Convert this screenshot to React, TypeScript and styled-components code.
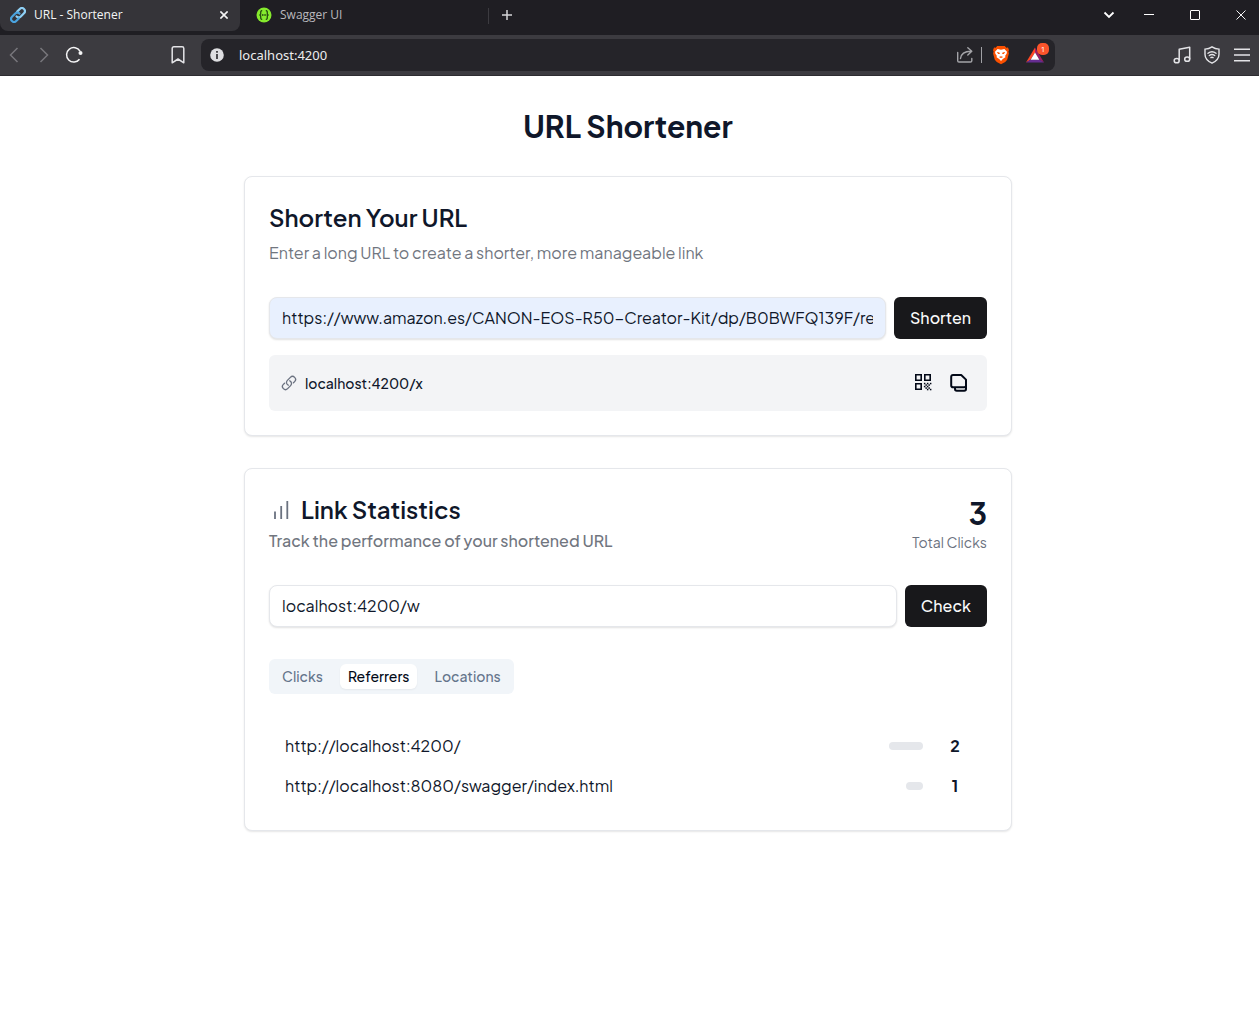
import React, { useState } from "react";
import styled, { createGlobalStyle } from "styled-components";
import { HiOutlineLink } from "react-icons/hi2";

const GlobalStyle = createGlobalStyle`
  *, *::before, *::after { box-sizing: border-box; }
  body {
    margin: 0;
    background: #fff;
    color: #0f172a;
    font-family: "Plus Jakarta Sans", Inter, "Liberation Sans", sans-serif;
    font-size: 16px;
    line-height: 24px;
  }
  button, input { font: inherit; color: inherit; }
  button { border: 0; padding: 0; background: none; cursor: pointer; }
  h1, h2, p { margin: 0; }
  svg { display: block; flex: none; }
`;

/* ---------- Browser chrome ---------- */

const Chrome = styled.header`
  font-family: "Segoe UI", "Open Sans", "Noto Sans", sans-serif;
  font-size: 12px;
  line-height: 16px;
  color: #f4f4f5;
`;

const TabStrip = styled.div`
  display: flex;
  align-items: flex-start;
  height: 35px;
  background: #1f1e23;
`;

const BrowserTab = styled.div<{ $active?: boolean }>`
  display: flex;
  align-items: center;
  gap: 8px;
  flex: 0 1 ${(p) => (p.$active ? 240 : 248)}px;
  height: 31px;
  padding: 0 8px 1px ${(p) => (p.$active ? 10 : 16)}px;
  border-radius: 0 0 8px 8px;
  background: ${(p) => (p.$active ? "#353439" : "transparent")};
  color: ${(p) => (p.$active ? "#f4f4f5" : "#b9b8bd")};
`;

const TabTitle = styled.span`
  flex: 1;
  white-space: nowrap;
`;

const IconButton = styled.button<{ $width: number }>`
  display: flex;
  align-items: center;
  justify-content: center;
  width: ${(p) => p.$width}px;
  height: 30px;
`;

const StripDivider = styled.span`
  width: 1px;
  height: 16px;
  margin-top: 8px;
  background: #3c3b40;
`;

const WindowControls = styled.div`
  display: flex;
  gap: 10px;
  margin-left: 4px;
`;

const Spacer = styled.div`
  flex: 1;
`;

const Toolbar = styled.div`
  display: grid;
  grid-template-columns: 201px 1fr 204px;
  align-items: center;
  height: 41px;
  background: #3c3b40;
  border-bottom: 1px solid #2d2c31;
`;

const NavButtons = styled.div`
  display: flex;
  gap: 2px;
  padding-right: 9px;
`;

const ToolButtons = styled.div`
  display: flex;
  justify-content: flex-end;
  gap: 2px;
  padding-right: 3px;
`;

const AddressBar = styled.div`
  display: flex;
  align-items: center;
  height: 32px;
  padding: 0 11px 0 9px;
  border-radius: 8px;
  background: #252429;
`;

const AddressInput = styled.input`
  flex: 1;
  min-width: 0;
  margin-left: 15px;
  padding: 0;
  border: 0;
  outline: 0;
  background: none;
  font-family: "Segoe UI", "Noto Sans", sans-serif;
  font-size: 13px;
  color: #ececee;
`;

const AddressActions = styled.div`
  display: flex;
  align-items: center;
`;

const ActionDivider = styled.span`
  width: 1px;
  height: 16px;
  margin: 0 10px 0 7px;
  background: #a0a0a4;
`;

const Rewards = styled.button`
  position: relative;
  margin-left: 16px;
`;

const Badge = styled.span`
  position: absolute;
  top: -4px;
  right: -5px;
  width: 12px;
  height: 12px;
  border-radius: 5px;
  background: #fb542b;
  color: #fff;
  font-size: 8px;
  line-height: 12px;
  text-align: center;
`;

/* ---------- Page ---------- */

const Main = styled.main`
  padding: 32px 19px 32px 16px;
`;

const Container = styled.div`
  display: flex;
  flex-direction: column;
  gap: 32px;
  max-width: 768px;
  margin: 0 auto;
`;

const PageTitle = styled.h1`
  font-size: 30px;
  line-height: 36px;
  font-weight: 700;
  text-align: center;
`;

const Card = styled.section`
  padding: 24px;
  border: 1px solid #e5e7eb;
  border-radius: 8px;
  background: #fff;
  box-shadow: 0 1px 2px rgba(0, 0, 0, 0.1);
`;

const CardHeader = styled.div`
  display: flex;
  justify-content: space-between;
  margin-bottom: 32px;
`;

const Heading = styled.div<{ $gap: number }>`
  display: flex;
  flex-direction: column;
  gap: ${(p) => p.$gap}px;
`;

const CardTitle = styled.h2`
  display: flex;
  align-items: center;
  gap: 8px;
  font-size: 24px;
  line-height: 32px;
  font-weight: 600;
`;

const Description = styled.p<{ $medium?: boolean }>`
  color: #71767f;
  font-weight: ${(p) => (p.$medium ? 500 : 400)};
`;

const Total = styled.div`
  display: flex;
  flex-direction: column;
  text-align: right;
`;

const TotalValue = styled.span`
  font-size: 30px;
  line-height: 40px;
  font-weight: 700;
`;

const TotalLabel = styled.span`
  font-size: 14px;
  line-height: 18px;
  color: #6b7280;
`;

const Form = styled.form`
  display: flex;
  gap: 8px;
`;

const TextField = styled.input<{ $filled?: boolean }>`
  flex: 1;
  min-width: 0;
  height: 42px;
  padding: 0 12px 2px;
  border: 1px solid #e5e7eb;
  border-radius: 8px;
  outline: 0;
  background: ${(p) => (p.$filled ? "#e8f0fe" : "#fff")};
  box-shadow: 0 1px 2px rgba(0, 0, 0, 0.12);
`;

const PrimaryButton = styled.button`
  height: 42px;
  padding: 0 16px;
  border-radius: 6px;
  background: #18181b;
  color: #fafafa;
  font-weight: 500;
`;

const Result = styled.div`
  display: flex;
  align-items: center;
  gap: 4px;
  height: 56px;
  margin-top: 16px;
  padding: 12px;
  border-radius: 6px;
  background: #f3f4f6;
`;

const ShortLink = styled.a`
  display: flex;
  align-items: center;
  gap: 8px;
  flex: 1;
  color: #0f172a;
  font-size: 14px;
  line-height: 20px;
  font-weight: 500;
  text-decoration: none;

  svg { color: #6b7280; }
  svg path { stroke-width: 2px; }
`;

const TabList = styled.div`
  display: inline-flex;
  gap: 9px;
  padding: 5px;
  border-radius: 6px;
  background: #f1f5f9;
`;

const Tab = styled.button<{ $selected: boolean }>`
  height: 25px;
  padding: 0 8px 2px;
  border-radius: 6px;
  background: ${(p) => (p.$selected ? "#fff" : "transparent")};
  color: ${(p) => (p.$selected ? "#020817" : "#64748b")};
  box-shadow: ${(p) => (p.$selected ? "0 1px 2px rgba(0, 0, 0, 0.05)" : "none")};
  font-size: 14px;
  line-height: 20px;
  font-weight: 500;
`;

const TabRow = styled.div`
  display: flex;
  margin: 32px 0;
`;

const Table = styled.table`
  width: 100%;
  border-collapse: collapse;

  td { height: 40px; padding: 0; }
`;

const SourceCell = styled.td`
  && { padding-left: 16px; }
`;

const CountCell = styled.td`
  width: 64px;
  text-align: center;
  font-weight: 700;
`;

const Bar = styled.div`
  height: 8px;
  margin-left: auto;
  border-radius: 4px;
  background: #e5e7eb;
`;

/* ---------- Icons ---------- */

const ChainIcon = () => (
  <svg width="16" height="16" viewBox="0 0 16 16" fill="none" strokeWidth="2.2" strokeLinecap="round">
    <path d="M7.2 4.6 9.8 2a2.9 2.9 0 0 1 4.2 4.2L10.8 9.4a2.9 2.9 0 0 1-4.2 0" stroke="#8fd0f5" />
    <path d="M8.8 11.4 6.2 14A2.9 2.9 0 0 1 2 9.8L5.2 6.6a2.9 2.9 0 0 1 4.2 0" stroke="#4aa3df" />
  </svg>
);

const SwaggerIcon = () => (
  <svg width="16" height="16" viewBox="0 0 16 16" fill="none" stroke="#1d3b10">
    <circle cx="8" cy="8" r="7.5" fill="#85ea2d" stroke="none" />
    <path d="M6.2 3.7c-2 0-1.300 1.800-1.500 3-.1.800-.5 1.300-1.400 1.300.9 0 1.300.5 1.400 1.300.2 1.200-.5 3 1.500 3M9.800 3.700c2 0 1.300 1.800 1.500 3 .1.800.5 1.300 1.400 1.300-.9 0-1.300.5-1.400 1.300-.2 1.200.5 3-1.500 3" strokeWidth="1.2" />
    <path d="M5.800 8h4.600" strokeWidth="1.300" strokeDasharray="1.200 .5" />
  </svg>
);

const CrossIcon = ({ size, weight }: { size: number; weight: number }) => (
  <svg width={size} height={size} viewBox="0 0 10 10" stroke="currentColor" strokeWidth={weight}>
    <path d="m.5.5 9 9m0-9-9 9" />
  </svg>
);

const PlusIcon = () => (
  <svg width="10" height="10" viewBox="0 0 10 10" stroke="#d5d5d8" strokeWidth="1.5">
    <path d="M5 0v10M0 5h10" />
  </svg>
);

const ChevronDownIcon = () => (
  <svg width="12" height="8" viewBox="0 0 12 8" fill="none" stroke="#fff" strokeWidth="1.8">
    <path d="m1.5 1.5 4.5 4.5 4.5-4.5" />
  </svg>
);

const MinimizeIcon = () => (
  <svg width="10" height="10" viewBox="0 0 10 10" fill="#fff">
    <path d="M0 4h10v1H0z" />
  </svg>
);

const MaximizeIcon = () => (
  <svg width="10" height="10" viewBox="0 0 10 10" fill="none" stroke="#fff">
    <rect x=".5" y=".5" width="9" height="9" rx=".5" />
  </svg>
);

const ArrowIcon = ({ forward }: { forward?: boolean }) => (
  <svg width="10" height="16" viewBox="0 0 10 16" fill="none" stroke="#77767b" strokeWidth="1.5">
    <path d={forward ? "m1.5 1 7 7-7 7" : "m8.5 1-7 7 7 7"} />
  </svg>
);

const ReloadIcon = () => (
  <svg width="18" height="18" viewBox="0 0 18 18" fill="none" stroke="#f4f4f5" strokeWidth="1.5">
    <path d="M14.5 13.2A7.2 7.2 0 1 1 15 5.2" />
    <circle cx="15.5" cy="7" r="2" fill="#f4f4f5" stroke="none" />
  </svg>
);

const BookmarkIcon = () => (
  <svg width="14" height="18" viewBox="0 0 14 18" fill="none" stroke="#e4e4e7" strokeWidth="1.5" strokeLinejoin="round">
    <path d="M1.2 2.5c0-1 .6-1.7 1.7-1.7h8.2c1.1 0 1.7.7 1.7 1.7v14.3L7 13l-5.8 3.8z" />
  </svg>
);

const InfoIcon = () => (
  <svg width="14" height="14" viewBox="0 0 14 14" fill="#252429">
    <circle cx="7" cy="7" r="6.8" fill="#dedee1" />
    <path d="M6.2 3h1.6v1.7H6.2zM6.2 6h1.6v5H6.2z" />
  </svg>
);

const ShareIcon = () => (
  <svg width="18" height="18" viewBox="0 0 18 18" fill="none" stroke="#a4a4a8" strokeWidth="1.4" strokeLinecap="round" strokeLinejoin="round">
    <path d="M1.7 6.5v8.2c0 .8.5 1.3 1.3 1.3h11.5c.8 0 1.3-.5 1.3-1.3v-2.2" />
    <path d="M4.5 12.5C5 8 8 5.5 15 5.3M11.8 1.8l4 3.5-4 3.7" />
  </svg>
);

const BraveIcon = () => (
  <svg width="18" height="20" viewBox="0 0 18 20">
    <path d="M5.2 1h7.6l1.5 1.7 1.7-.2 1 2.7-.6 1.3.5 2-1.7 6.2-2 2.4L9 19.2l-4.2-2.1-2-2.4L1.1 8.5l.5-2L1 5.2l1-2.7 1.7.2z" fill="#fb5000" />
    <path d="m5.6 4 3.4.8 3.4-.8L15 6.800l-.4 1.900-1.400 2 .2 1.500-2.600 1.800L9 16l-1.800-2-2.600-1.800.2-1.500-1.400-2L3 6.800z" fill="#fff" />
    <path d="m4.7 7 2.7.6.5 1.3-1.7.2zM13.300 7l-2.700.6-.5 1.300 1.700.2zM6.800 12l2.200 1.100 2.200-1.100L9 11.300z" fill="#fb5000" />
  </svg>
);

const BatIcon = () => (
  <svg width="18" height="16" viewBox="0 0 18 16">
    <path d="M9 .5 0 15.5l4.5-2.7L9 5.5z" fill="#ff4724" />
    <path d="M9 .5v5l4.5 7.3 4.5 2.7z" fill="#9e1f63" />
    <path d="M0 15.5h18l-4.5-2.9h-9z" fill="#662d91" />
    <path d="m9 5.5 4.4 7.2H4.6z" fill="#fff" />
  </svg>
);

const MusicIcon = () => (
  <svg width="18" height="18" viewBox="0 0 18 18" fill="none" stroke="#e4e4e7" strokeWidth="1.5" strokeLinejoin="round">
    <path d="M6.2 14.5V3.2l10.5-2v12" />
    <ellipse cx="3.7" cy="14.7" rx="2.5" ry="2.1" />
    <ellipse cx="14.2" cy="13.2" rx="2.5" ry="2.1" />
  </svg>
);

const ShieldIcon = () => (
  <svg width="16" height="18" viewBox="0 0 16 18" fill="none" stroke="#e4e4e7" strokeWidth="1.4" strokeLinecap="round">
    <path d="M8 .8c2 1.3 4.3 2.1 7 2.3v5.2c0 4.3-2.8 7-7 8.9-4.2-1.9-7-4.6-7-8.9V3.1C3.7 2.9 6 2.1 8 .8z" />
    <path d="M4 7.300c2.500-1.900 5.500-1.900 8 0M5.300 9.500c1.700-1.200 3.700-1.200 5.400 0M6.900 11.600c.7-.4 1.500-.4 2.200 0" />
  </svg>
);

const MenuIcon = () => (
  <svg width="16" height="14" viewBox="0 0 16 14" stroke="#e4e4e7" strokeWidth="1.5">
    <path d="M0 1.2h16M0 7h16M0 12.8h16" />
  </svg>
);

const BarsIcon = () => (
  <svg width="24" height="24" viewBox="0 0 24 24" stroke="#6b7280" strokeWidth="1.8">
    <path d="M6 14.5V22M12.2 9v13M18.3 4v18" />
  </svg>
);

const QR_DOTS = [
  [9, 9], [12, 9],
  [10.5, 10.5], [13.5, 10.5], [15, 9],
  [9, 12], [12, 12],
  [10.5, 13.5], [13.5, 13.5],
  [12, 15], [15, 15],
];

const QrIcon = () => (
  <svg width="18" height="18" viewBox="0 0 18 18" fill="none" stroke="#020817" strokeWidth="1.6">
    <path d="M1.8.8h5.400v5.400H1.800zM10.800.8h5.400v5.400h-5.400zM1.800 9.800h5.400v5.400H1.800z" />
    {QR_DOTS.map(([x, y]) => (
      <rect key={`${x}-${y}`} x={x + 0.9} y={y - 0.2} width="1.5" height="1.5" fill="#020817" stroke="none" />
    ))}
  </svg>
);

const CopyIcon = () => (
  <svg width="18" height="20" viewBox="0 0 18 20" fill="none" stroke="#020817" strokeWidth="2" strokeLinejoin="round">
    <path d="M3 2h8.2L16 6.6v5.900c0 1.100-.7 1.700-1.700 1.700H3.200c-1.200 0-2-.7-2-1.800V3.800C1.200 2.700 1.900 2 3 2z" />
    <path d="M5 14.200V16c0 1.100.7 1.800 1.800 1.800h7.400c1.100 0 1.800-.7 1.800-1.800v-5" />
  </svg>
);

/* ---------- App ---------- */

const STAT_TABS = ["Clicks", "Referrers", "Locations"];

const REFERRERS = [
  { source: "http://localhost:4200/", count: 2 },
  { source: "http://localhost:8080/swagger/index.html", count: 1 },
];

const BAR_UNIT = 17;

function BrowserChrome() {
  return (
    <Chrome>
      <TabStrip>
        <BrowserTab $active>
          <ChainIcon />
          <TabTitle>URL - Shortener</TabTitle>
          <IconButton $width={16} aria-label="Close tab">
            <CrossIcon size={8} weight={2} />
          </IconButton>
        </BrowserTab>
        <BrowserTab>
          <SwaggerIcon />
          <TabTitle>Swagger UI</TabTitle>
        </BrowserTab>
        <StripDivider />
        <IconButton $width={36} aria-label="New tab"><PlusIcon /></IconButton>
        <Spacer />
        <IconButton $width={36} aria-label="Search tabs"><ChevronDownIcon /></IconButton>
        <WindowControls>
          <IconButton $width={36} aria-label="Minimize"><MinimizeIcon /></IconButton>
          <IconButton $width={36} aria-label="Maximize"><MaximizeIcon /></IconButton>
          <IconButton $width={36} aria-label="Close window"><CrossIcon size={10} weight={1} /></IconButton>
        </WindowControls>
      </TabStrip>
      <Toolbar>
        <NavButtons>
          <IconButton $width={28} aria-label="Back"><ArrowIcon /></IconButton>
          <IconButton $width={28} aria-label="Forward"><ArrowIcon forward /></IconButton>
          <IconButton $width={28} aria-label="Reload"><ReloadIcon /></IconButton>
          <Spacer />
          <IconButton $width={28} aria-label="Bookmark"><BookmarkIcon /></IconButton>
        </NavButtons>
        <AddressBar>
          <InfoIcon />
          <AddressInput aria-label="Address" defaultValue="localhost:4200" />
          <AddressActions>
            <IconButton $width={18} aria-label="Share"><ShareIcon /></IconButton>
            <ActionDivider />
            <IconButton $width={18} aria-label="Shields"><BraveIcon /></IconButton>
            <Rewards aria-label="Rewards">
              <BatIcon />
              <Badge>1</Badge>
            </Rewards>
          </AddressActions>
        </AddressBar>
        <ToolButtons>
          <IconButton $width={28} aria-label="Playlist"><MusicIcon /></IconButton>
          <IconButton $width={28} aria-label="VPN"><ShieldIcon /></IconButton>
          <IconButton $width={28} aria-label="Menu"><MenuIcon /></IconButton>
        </ToolButtons>
      </Toolbar>
    </Chrome>
  );
}

export default function App() {
  const [tab, setTab] = useState("Referrers");
  const stop = (e: React.FormEvent) => e.preventDefault();

  return (
    <>
      <GlobalStyle />
      <BrowserChrome />
      <Main>
        <Container>
          <PageTitle>URL Shortener</PageTitle>

          <Card>
            <CardHeader>
              <Heading $gap={8}>
                <CardTitle>Shorten Your URL</CardTitle>
                <Description>Enter a long URL to create a shorter, more manageable link</Description>
              </Heading>
            </CardHeader>
            <Form onSubmit={stop}>
              <TextField
                $filled
                aria-label="Long URL"
                defaultValue="https://www.amazon.es/CANON-EOS-R50-Creator-Kit/dp/B0BWFQ139F/re"
              />
              <PrimaryButton type="submit">Shorten</PrimaryButton>
            </Form>
            <Result>
              <ShortLink href="#x">
                <HiOutlineLink size={16} />
                localhost:4200/x
              </ShortLink>
              <IconButton $width={32} aria-label="Show QR code"><QrIcon /></IconButton>
              <IconButton $width={32} aria-label="Copy link"><CopyIcon /></IconButton>
            </Result>
          </Card>

          <Card>
            <CardHeader>
              <Heading $gap={4}>
                <CardTitle><BarsIcon />Link Statistics</CardTitle>
                <Description $medium>Track the performance of your shortened URL</Description>
              </Heading>
              <Total>
                <TotalValue>3</TotalValue>
                <TotalLabel>Total Clicks</TotalLabel>
              </Total>
            </CardHeader>
            <Form onSubmit={stop}>
              <TextField aria-label="Short URL" defaultValue="localhost:4200/w" />
              <PrimaryButton type="submit">Check</PrimaryButton>
            </Form>
            <TabRow>
              <TabList role="tablist">
                {STAT_TABS.map((name) => (
                  <Tab
                    key={name}
                    role="tab"
                    aria-selected={tab === name}
                    $selected={tab === name}
                    onClick={() => setTab(name)}
                  >
                    {name}
                  </Tab>
                ))}
              </TabList>
            </TabRow>
            <Table>
              <tbody>
                {REFERRERS.map(({ source, count }) => (
                  <tr key={source}>
                    <SourceCell>{source}</SourceCell>
                    <td><Bar style={{ width: count * BAR_UNIT }} /></td>
                    <CountCell>{count}</CountCell>
                  </tr>
                ))}
              </tbody>
            </Table>
          </Card>
        </Container>
      </Main>
    </>
  );
}
